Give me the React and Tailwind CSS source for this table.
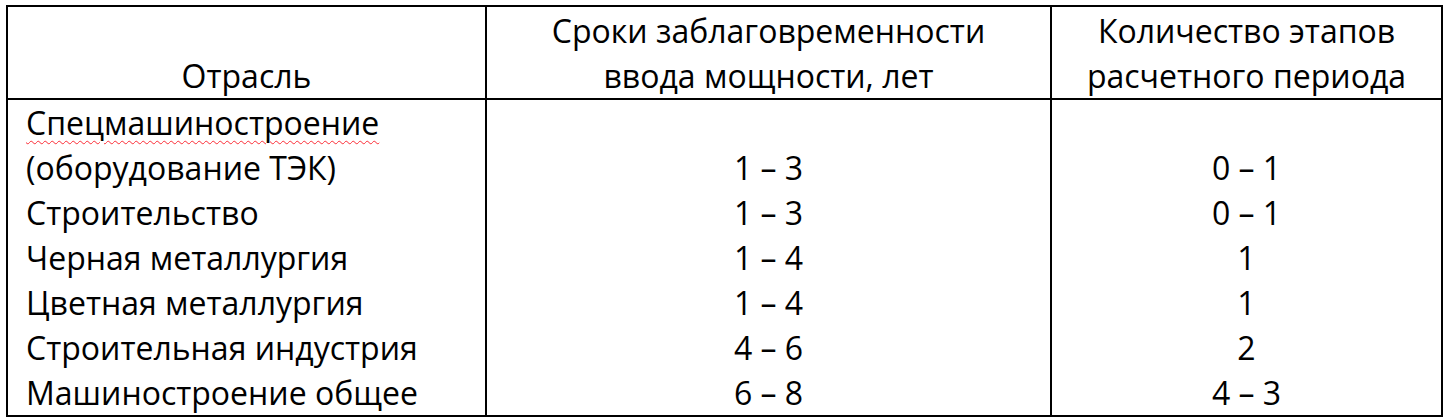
const rows = [
  { name: "Строительство", term: "1 – 3", stages: "0 – 1" },
  { name: "Черная металлургия", term: "1 – 4", stages: "1" },
  { name: "Цветная металлургия", term: "1 – 4", stages: "1" },
  { name: "Строительная индустрия", term: "4 – 6", stages: "2" },
  { name: "Машиностроение общее", term: "6 – 8", stages: "4 – 3" },
];

const App = () => {
  return (
    <div className="w-[1450px] h-[419px] bg-white pl-[6px] pt-[5px] text-black font-['Open_Sans',sans-serif] text-[32px] leading-[45px]">
      <table className="border-collapse table-fixed border-2 border-black">
        <colgroup>
          <col className="w-[479px]" />
          <col className="w-[565px]" />
          <col className="w-[391px]" />
        </colgroup>
        <thead>
          <tr className="border-b-2 border-black">
            <th className="font-normal align-bottom text-center border-r-2 border-black pt-[1px]">
              Отрасль
            </th>
            <th className="font-normal align-bottom text-center border-r-2 border-black pt-[1px]">
              Сроки заблаговременности
              <br />
              ввода мощности, лет
            </th>
            <th className="font-normal align-bottom text-center pt-[1px]">
              Количество этапов
              <br />
              расчетного периода
            </th>
          </tr>
        </thead>
        <tbody>
          <tr>
            <td className="align-bottom pl-[18px] border-r-2 border-black">
              <span className="underline decoration-wavy decoration-red-500 decoration-1 underline-offset-[5px]">
                Спецмашиностроение
              </span>
              <br />
              (оборудование ТЭК)
            </td>
            <td className="align-bottom text-center border-r-2 border-black">1 – 3</td>
            <td className="align-bottom text-center">0 – 1</td>
          </tr>
          {rows.map((r) => (
            <tr key={r.name}>
              <td className="pl-[18px] border-r-2 border-black">{r.name}</td>
              <td className="text-center border-r-2 border-black">{r.term}</td>
              <td className="text-center">{r.stages}</td>
            </tr>
          ))}
        </tbody>
      </table>
    </div>
  );
};

export default App;
